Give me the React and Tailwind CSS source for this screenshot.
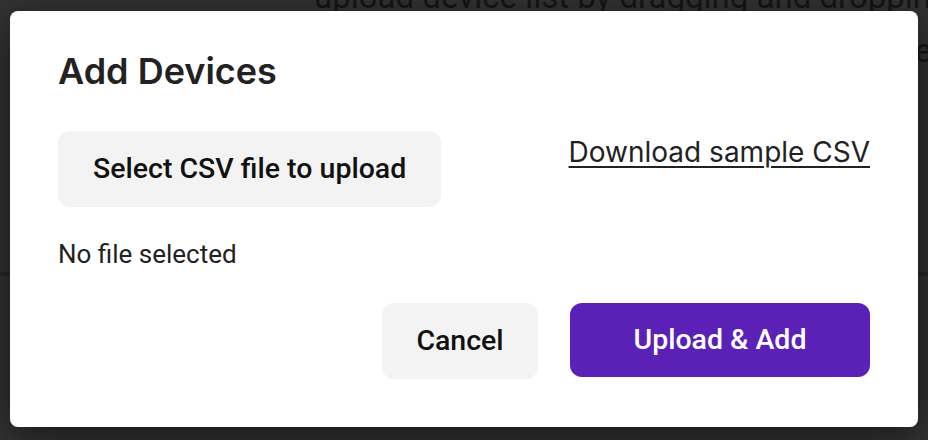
import React from 'react';

export default function App() {
  return (
    <div className="relative h-[440px] w-[928px] overflow-hidden bg-[#333333] font-['Roboto',sans-serif]">
      {/* page behind the dimmed overlay */}
      <div className="text-[33px] leading-[34px] text-[#161616]">
        <p className="-mt-[20px] whitespace-nowrap pl-[314px]">upload device list by dragging and dropping</p>
        <p className="mt-[20px] -mr-[4px] whitespace-nowrap text-right">or use the button below to select a file</p>
      </div>
      <div className="mt-[204px] h-[4px] w-full bg-[#262626]" />

      <div className="absolute inset-0 pl-[10px] pt-[11px]">
        <div className="flex h-[416px] w-[908px] flex-col rounded-[8px] bg-white px-[48px] pt-[40px] pb-[48px] shadow-[0_8px_40px_rgba(0,0,0,0.55)]">
          <h2 className="font-['Inter',sans-serif] text-[36px] leading-[40px] font-semibold text-[#222222]">Add Devices</h2>

          <div className="mt-[40px] flex items-start justify-between">
            <button className="h-[76px] rounded-[12px] bg-[#f3f3f3] px-[35px] text-[28.5px] font-medium text-[#111111]">
              Select CSV file to upload
            </button>
            <a href="#" className="mt-[4px] font-['Inter',sans-serif] text-[28px] leading-[34px] text-[#222222] underline underline-offset-[4px] decoration-[1.5px]">
              Download sample CSV
            </a>
          </div>

          <p className="mt-[33px] text-[26px] leading-[28px] text-[#222222]">No file selected</p>

          <div className="mt-[35px] flex justify-end gap-[32px]">
            <button className="h-[76px] w-[156px] rounded-[12px] bg-[#f3f3f3] text-[28.5px] font-medium text-[#111111]">
              Cancel
            </button>
            <button className="h-[74px] w-[300px] rounded-[12px] bg-[#5b21b6] text-[28.5px] font-medium text-white">
              Upload &amp; Add
            </button>
          </div>
        </div>
      </div>
    </div>
  );
}
